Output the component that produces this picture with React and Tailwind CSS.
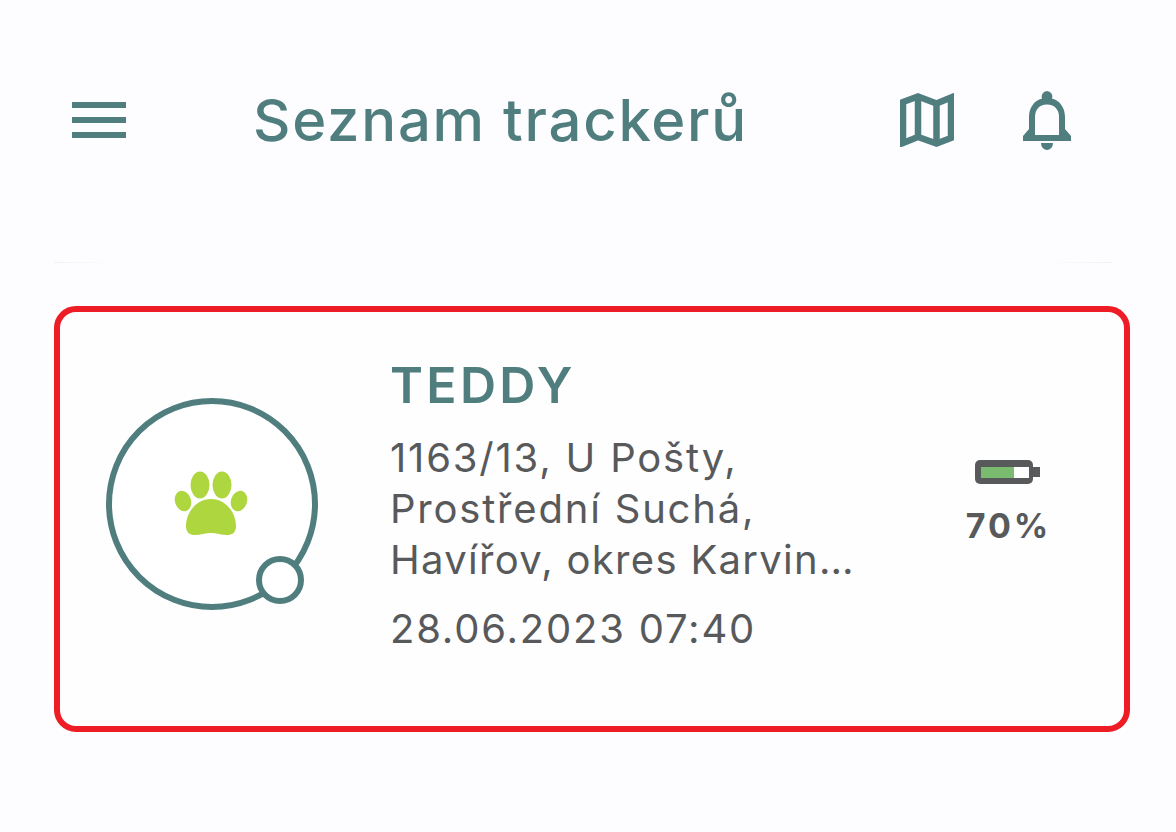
export default function App() {
  return (
    <div className="w-[1176px] h-[832px] overflow-hidden bg-[#fdfdff] font-['Inter',sans-serif] flex flex-col">
      <header className="h-[262px] pt-[84px] pl-[72px] flex items-start shrink-0">
        <svg width="54" height="36" viewBox="0 0 54 36" className="mt-[18px] shrink-0" fill="#507e7f">
          <rect width="54" height="6" />
          <rect y="15" width="54" height="6" />
          <rect y="30" width="54" height="6" />
        </svg>
        <h1 className="ml-[127px] w-[493px] text-[58px] leading-[72px] font-medium tracking-[1.75px] text-[#507e7f] whitespace-nowrap">Seznam trackerů</h1>
        <svg width="54" height="54" viewBox="0 0 54 54" className="ml-[154px] mt-[9px] shrink-0" fill="none" stroke="#507e7f" strokeWidth="6.5">
          <path d="M3 9 L18 3.500 L36.500 10.500 L51 4.500 V45 L36.500 50.500 L18 44 L3 50 Z" />
          <path d="M18 3.500 V44 M36.500 10.500 V50.500" />
        </svg>
        <svg width="48" height="60" viewBox="0 0 48 60" className="ml-[69px] mt-[7px] shrink-0" fill="#507e7f">
          <path fillRule="evenodd" d="M24 0 a5.500 5.500 0 0 1 5 7.500 C37 9.500 42 17 42 26 V38 L48 45 V50 H0 V45 L6 38 V26 C6 17 11 9.500 19 7.500 A5.500 5.500 0 0 1 24 0 Z M24 13.500 C16 13.500 12 19 12 26 V44 H36 V26 C36 19 32 13.500 24 13.500 Z" />
          <path d="M18 52 H30 A6 7 0 0 1 18 52 Z" />
        </svg>
      </header>
      <div className="flex justify-between pl-[54px] pr-[64px] h-px shrink-0">
        <div className="w-[60px] h-px bg-gradient-to-r from-[#f1f1f3] to-[#fdfdff]" />
        <div className="w-[66px] h-px bg-gradient-to-l from-[#f1f1f3] to-[#fdfdff]" />
      </div>
      <section className="ml-[54px] mt-[43px] w-[1076px] h-[426px] border-[6px] border-[#ee1c25] rounded-[22px] bg-[#fefeff] flex items-start shrink-0">
        <div className="relative w-[212px] h-[212px] ml-[46px] mt-[86px] rounded-full border-[6px] border-[#507e7f] bg-white shrink-0 flex items-center justify-center">
          <svg width="74" height="64" viewBox="0 0 74 64" className="mb-[2px] ml-[-3px]" fill="#aed63f">
            <ellipse cx="9" cy="30" rx="8" ry="10.500" transform="rotate(-18 9 30)" />
            <ellipse cx="26" cy="14" rx="9.500" ry="13.500" />
            <ellipse cx="48" cy="14" rx="9.500" ry="13.500" />
            <ellipse cx="65" cy="30" rx="8" ry="10.500" transform="rotate(18 65 30)" />
            <path d="M37 28 C52 28 62 42 62 55 C62 62 58 64 53 64 C47 64 43 62 37 62 C31 62 27 64 21 64 C16 64 12 62 12 55 C12 42 22 28 37 28 Z" />
          </svg>
          <div className="absolute left-[144px] top-[152px] w-[48px] h-[48px] rounded-full border-[6px] border-[#507e7f] bg-white" />
        </div>
        <div className="ml-[72px] mt-[46px] w-[572px] shrink-0">
          <h2 className="text-[50px] leading-[54px] font-semibold tracking-[3.3px] text-[#507e7f]">TEDDY</h2>
          <p className="mt-[20px] text-[40px] leading-[51px] tracking-[1.8px] text-[#58595b]">
            1163/13, U Pošty,<br />
            Prostřední Suchá,<br />
            <span className="tracking-[1.3px]">Havířov, okres Karvin</span><span className="tracking-[-4px]">…</span>
          </p>
          <p className="mt-[18px] text-[40px] leading-[51px] tracking-[1.8px] text-[#58595b]">28.06.2023 07:40</p>
        </div>
        <div className="mt-[148px] w-[90px] flex flex-col items-center shrink-0">
          <svg width="65" height="24" viewBox="0 0 65 24" className="ml-[1px]">
            <rect x="0" y="0" width="58" height="24" rx="5" fill="#58595b" />
            <rect x="58" y="7" width="7" height="10" fill="#58595b" />
            <rect x="6" y="7" width="48" height="11" fill="#ffffff" />
            <rect x="6" y="7" width="33" height="11" fill="#7bbb6f" />
          </svg>
          <div className="mt-[22px] ml-[3px] text-[34px] leading-[40px] font-bold tracking-[3px] text-[#58595b]">70%</div>
        </div>
      </section>
    </div>
  );
}
